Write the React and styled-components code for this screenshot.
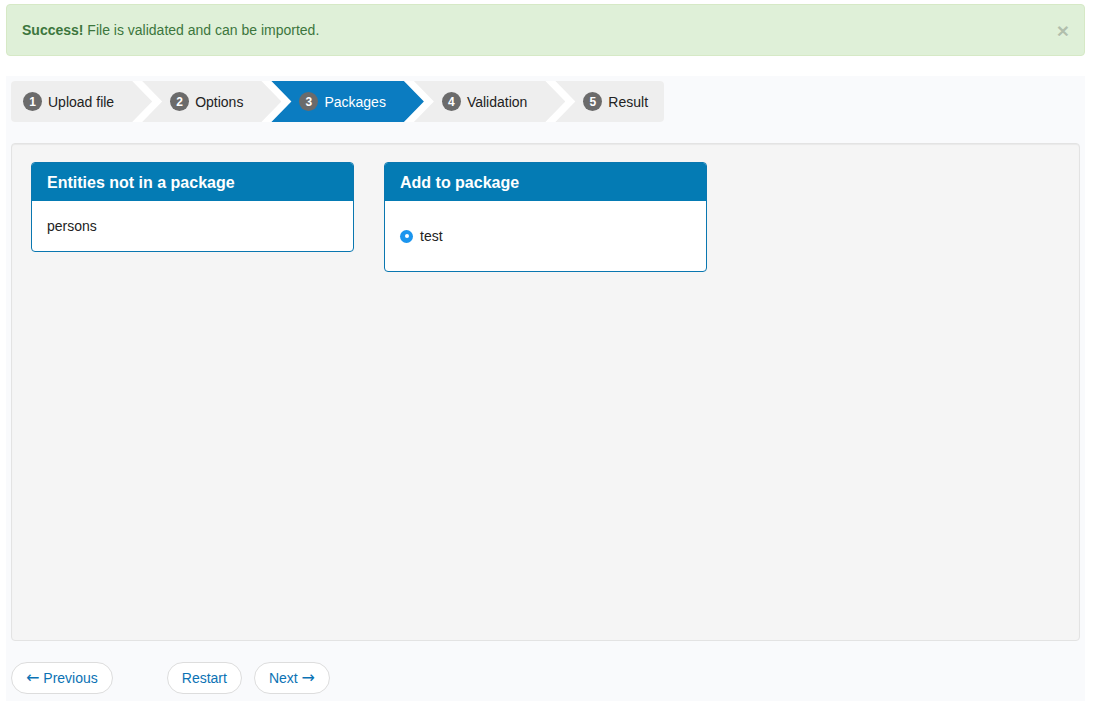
import React, { useState } from 'react';
import styled, { createGlobalStyle } from 'styled-components';

const GlobalStyle = createGlobalStyle`
  html, body {
    margin: 0;
    padding: 0;
    background: #ffffff;
  }
  body {
    font-family: "Liberation Sans", Arial, sans-serif;
    font-size: 14px;
    line-height: 20px;
    color: #333333;
  }
  * { box-sizing: border-box; }
`;

const steps = ['Upload file', 'Options', 'Packages', 'Validation', 'Result'];

export default function App() {
  const [alertOpen, setAlertOpen] = useState(true);
  const [pkg, setPkg] = useState('test');
  const active = 2;

  return (
    <Page>
      <GlobalStyle />
      {alertOpen && (
        <Alert>
          <strong>Success!</strong> File is validated and can be imported.
          <Close onClick={() => setAlertOpen(false)}>&times;</Close>
        </Alert>
      )}
      <Wizard>
        <StepList>
          {steps.map((s, i) => (
            <Step
              key={s}
              $active={i === active}
              $first={i === 0}
              $last={i === steps.length - 1}
            >
              <Badge>{i + 1}</Badge>
              {s}
            </Step>
          ))}
        </StepList>

        <Well>
          <Cards>
            <Card>
              <CardHeader>Entities not in a package</CardHeader>
              <CardBody>persons</CardBody>
            </Card>
            <Card>
              <CardHeader>Add to package</CardHeader>
              <CardBody>
                <RadioRow>
                  <Radio
                    type="radio"
                    name="package"
                    checked={pkg === 'test'}
                    onChange={() => setPkg('test')}
                  />
                  test
                </RadioRow>
              </CardBody>
            </Card>
          </Cards>
        </Well>

        <Pager>
          <PagerButton><Arrow>&larr;</Arrow> Previous</PagerButton>
          <PagerButton $push>Restart</PagerButton>
          <PagerButton>Next <Arrow>&rarr;</Arrow></PagerButton>
        </Pager>
      </Wizard>
    </Page>
  );
}

const Page = styled.div`
  padding: 4px 8px 0 6px;
  height: 701px;
  overflow: hidden;
`;

const Alert = styled.div`
  position: relative;
  background-color: #dff0d8;
  border: 1px solid #d6e9c6;
  border-radius: 4px;
  color: #3c763d;
  padding: 15px 35px 15px 15px;
  margin-bottom: 20px;
  height: 52px;

  strong {
    font-weight: bold;
  }
`;

const Close = styled.button`
  position: absolute;
  right: 15px;
  top: 15px;
  border: 0;
  padding: 0;
  background: transparent;
  cursor: pointer;
  font-family: "Liberation Sans", Arial, sans-serif;
  font-size: 21px;
  font-weight: bold;
  line-height: 21px;
  color: #000000;
  opacity: 0.2;
  text-shadow: 0 1px 0 #fff;
`;

const Wizard = styled.div`
  background-color: #f9fafc;
  padding: 5px;
  height: 630px;
`;

const StepList = styled.ol`
  display: flex;
  width: fit-content;
  list-style: none;
  margin: 0 0 21px 0;
  padding: 0;
  background: #ffffff;
  border-radius: 4px;
  overflow: hidden;
`;

const Step = styled.li`
  display: flex;
  align-items: center;
  height: 41px;
  padding: 0 ${({ $last }) => ($last ? '16px' : '38px')} 0 ${({ $first }) => ($first ? '12px' : '28px')};
  margin-left: ${({ $first }) => ($first ? '0' : '-10px')};
  background-color: ${({ $active }) => ($active ? '#0b7cc1' : '#eeeeee')};
  color: ${({ $active }) => ($active ? '#ffffff' : '#222222')};
  font-size: 14px;
  white-space: nowrap;
  clip-path: ${({ $first, $last }) =>
    $first
      ? 'polygon(0 0, calc(100% - 20px) 0, 100% 50%, calc(100% - 20px) 100%, 0 100%)'
      : $last
      ? 'polygon(0 0, 100% 0, 100% 100%, 0 100%, 20px 50%)'
      : 'polygon(0 0, calc(100% - 20px) 0, 100% 50%, calc(100% - 20px) 100%, 0 100%, 20px 50%)'};
`;

const Badge = styled.span`
  display: inline-flex;
  align-items: center;
  justify-content: center;
  width: 19px;
  height: 19px;
  border-radius: 50%;
  margin-right: 6px;
  background-color: #6b6b6b;
  color: #ffffff;
  font-size: 12px;
  font-weight: bold;
  line-height: 1;
`;

const Well = styled.div`
  height: 498px;
  background-color: #f5f5f5;
  border: 1px solid #e3e3e3;
  border-radius: 4px;
  box-shadow: inset 0 1px 1px rgba(0, 0, 0, 0.05);
  padding: 18px 19px 19px 19px;
  margin-bottom: 21px;
`;

const Cards = styled.div`
  display: grid;
  grid-template-columns: repeat(3, 1fr);
  column-gap: 30px;
  align-items: start;
`;

const Card = styled.section`
  background-color: #ffffff;
  border: 1px solid #0a77b0;
  border-radius: 4px;
  overflow: hidden;
`;

const CardHeader = styled.h3`
  margin: 0;
  height: 38px;
  padding: 10px 15px 8px;
  background-color: #047bb4;
  color: #ffffff;
  font-size: 16px;
  font-weight: bold;
  line-height: 20px;
`;

const CardBody = styled.div`
  padding: 15px;
  font-size: 14px;
  line-height: 20px;
  color: #222222;
`;

const RadioRow = styled.label`
  display: flex;
  align-items: center;
  margin: 10px 0;
  cursor: pointer;
`;

const Radio = styled.input`
  appearance: none;
  width: 13px;
  height: 13px;
  margin: 0 7px 0 0;
  border-radius: 50%;
  background-color: #1b95ee;
  position: relative;
  cursor: pointer;

  &:checked::after {
    content: '';
    position: absolute;
    left: 4.5px;
    top: 4.5px;
    width: 4px;
    height: 4px;
    border-radius: 50%;
    background: #ffffff;
  }
`;

const Pager = styled.nav`
  display: flex;
  align-items: center;
  gap: 12px;
`;

const PagerButton = styled.a`
  display: inline-block;
  margin-left: ${({ $push }) => ($push ? '42px' : '0')};
  padding: 5px 14px;
  height: 32px;
  line-height: 20px;
  font-size: 14px;
  color: #0b72b4;
  background-color: #ffffff;
  border: 1px solid #dddddd;
  border-radius: 16px;
  cursor: pointer;
  text-decoration: none;
  white-space: nowrap;
`;

const Arrow = styled.span`
  font-family: "DejaVu Sans", sans-serif;
  font-size: 16px;
  line-height: 1;
`;
